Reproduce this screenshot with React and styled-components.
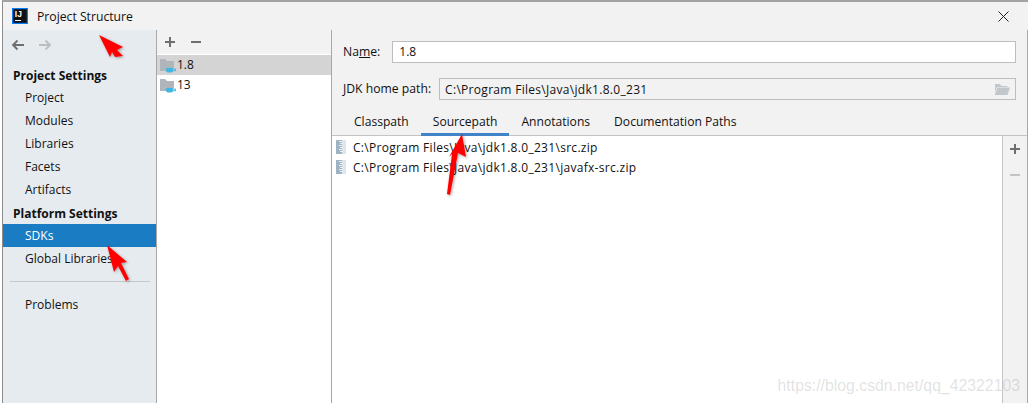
import React from "react";
import styled, { createGlobalStyle } from "styled-components";

const GlobalStyle = createGlobalStyle`
  html, body {
    margin: 0;
    padding: 0;
    background: #fff;
  }
  body {
    font-family: "Open Sans", "Noto Sans", sans-serif;
    font-size: 12px;
    color: #111;
  }
`;

const projectItems = ["Project", "Modules", "Libraries", "Facets", "Artifacts"];
const tabs = ["Classpath", "Sourcepath", "Annotations", "Documentation Paths"];
const paths = [
  "C:\\Program Files\\Java\\jdk1.8.0_231\\src.zip",
  "C:\\Program Files\\Java\\jdk1.8.0_231\\javafx-src.zip",
];

const PlusIcon = ({ color = "#6e6e6e" }) => (
  <svg width="12" height="12" viewBox="0 0 12 12">
    <path d="M5 1h2v4h4v2H7v4H5V7H1V5h4z" fill={color} />
  </svg>
);

const MinusIcon = ({ color = "#6e6e6e" }) => (
  <svg width="12" height="12" viewBox="0 0 12 12">
    <path d="M1 5h10v2H1z" fill={color} />
  </svg>
);

const NavArrow = ({ flip, color }) => (
  <svg width="14" height="12" viewBox="0 0 14 12" style={{ transform: flip ? "scaleX(-1)" : "none" }}>
    <path d="M13 6H2M6.500 1.500 2 6l4.500 4.500" fill="none" stroke={color} strokeWidth="1.800" />
  </svg>
);

const JdkIcon = () => (
  <svg width="17" height="16" viewBox="0 0 17 16">
    <path d="M0 1h5l2 2h7v7H8v3H0z" fill="#afb5bb" />
    <path d="M6 10h7v2.500a2 2 0 0 1-2 2H8a2 2 0 0 1-2-2z" fill="#40b6e0" />
    <path d="M13 11h2.500v1.800H13" fill="none" stroke="#40b6e0" strokeWidth="1" />
  </svg>
);

const ZipIcon = () => (
  <svg width="10" height="14" viewBox="0 0 10 14">
    <rect width="10" height="14" fill="#9fb4c2" />
    <rect x="6" width="4" height="14" fill="#dfe6eb" />
    <path d="M3 1h3v1H3zM4 3h3v1H4zM3 5h3v1H3zM4 7h3v1H4zM3 9h3v1H3zM4 11h3v1H4z" fill="#eef2f5" />
  </svg>
);

const IdeaLogo = () => (
  <svg width="16" height="16" viewBox="0 0 16 16">
    <rect width="16" height="16" fill="#087cfa" />
    <rect x="1.200" y="1.200" width="13.600" height="13.600" fill="#111" />
    <path d="M3 12h6v1H3z" fill="#fff" />
    <text x="2.800" y="9" fontFamily="Liberation Sans" fontWeight="700" fontSize="8.500" fill="#fff">IJ</text>
  </svg>
);

const OpenFolder = () => (
  <svg width="16" height="13" viewBox="0 0 16 13">
    <path d="M1 11 3.500 4.500H16L13.500 12H1zM1 9V1h5l1.500 2h6v1H3z" fill="#c2c7cc" />
  </svg>
);

const App = () => (
  <Window>
    <GlobalStyle />
    <TitleBar>
      <IdeaLogo />
      <TitleText>Project Structure</TitleText>
      <CloseButton>
        <svg width="11" height="11" viewBox="0 0 11 11">
          <path d="M.5.5l10 10M10.500.5l-10 10" stroke="#222" strokeWidth="1" fill="none" />
        </svg>
      </CloseButton>
    </TitleBar>

    <Body>
      <Sidebar>
        <NavBar>
          <NavArrow color="#6e6e6e" />
          <NavArrow flip color="#bdbdbd" />
        </NavBar>
        <SectionTitle>Project Settings</SectionTitle>
        {projectItems.map((item) => (
          <NavItem key={item}>{item}</NavItem>
        ))}
        <SectionTitle>Platform Settings</SectionTitle>
        <NavItem $active>SDKs</NavItem>
        <NavItem>Global Libraries</NavItem>
        <SideDivider />
        <NavItem>Problems</NavItem>
      </Sidebar>

      <SdkColumn>
        <SdkToolbar>
          <PlusIcon />
          <MinusIcon />
        </SdkToolbar>
        <SdkList>
          <SdkRow $selected>
            <JdkIcon />
            1.8
          </SdkRow>
          <SdkRow>
            <JdkIcon />
            13
          </SdkRow>
        </SdkList>
      </SdkColumn>

      <Detail>
        <Fields>
          <FieldRow>
            <FieldLabel>
              Na<u>m</u>e:
            </FieldLabel>
            <NameInput>1.8</NameInput>
          </FieldRow>
          <FieldRow>
            <FieldLabel>JDK home path:</FieldLabel>
            <PathInput>
              <PathValue>C:\Program Files\Java\jdk1.8.0_231</PathValue>
              <OpenFolder />
            </PathInput>
          </FieldRow>
        </Fields>
        <TabBar>
          {tabs.map((tab) => (
            <Tab key={tab} $active={tab === "Sourcepath"}>
              {tab}
            </Tab>
          ))}
        </TabBar>
        <TabBody>
          <PathList>
            {paths.map((path) => (
              <PathRow key={path}>
                <ZipIcon />
                <PathValue>{path}</PathValue>
              </PathRow>
            ))}
          </PathList>
          <SideTools>
            <PlusIcon />
            <MinusIcon color="#c4c4c4" />
          </SideTools>
        </TabBody>
      </Detail>
    </Body>

    <Watermark>https://blog.csdn.net/qq_42322103</Watermark>

    <ArrowLayer width="1030" height="403" viewBox="0 0 1030 403">
      <defs>
        <filter id="arrowShadow" x="-40%" y="-40%" width="180%" height="180%">
          <feDropShadow dx="1" dy="1" stdDeviation="1.500" floodColor="#000" floodOpacity="0.35" />
        </filter>
      </defs>
      <g fill="#f00" filter="url(#arrowShadow)">
        <path d="M99 35 123 47 117 50 123 56 115 57 112 52 110 57z" />
        <path d="M107 245 127 262 121 263 129 279 126 281 118 266 114 272z" />
        <path d="M462 134 466 157 458 153 450 195 447 194 452 154 449 157z" />
      </g>
    </ArrowLayer>
  </Window>
);

const Window = styled.div`
  position: relative;
  box-sizing: border-box;
  width: 1026px;
  height: 403px;
  margin-left: 2px;
  overflow: hidden;
  display: flex;
  flex-direction: column;
  background: #f2f2f2;
  border-top: 2px solid #a3a3a3;
  border-left: 1px solid #8c8c8c;
`;

const TitleBar = styled.div`
  flex: 0 0 28px;
  display: flex;
  align-items: center;
  padding-left: 9px;
  background: #f2f2f2;
`;

const TitleText = styled.div`
  margin-left: 9px;
  font-size: 12.2px;
`;

const CloseButton = styled.div`
  margin-left: auto;
  margin-right: 19px;
  display: flex;
`;

const Body = styled.div`
  flex: 1;
  min-height: 0;
  display: flex;
  border-right: 1px solid #a8a8a8;
`;

const Sidebar = styled.div`
  box-sizing: border-box;
  flex: 0 0 154px;
  background: #e6ebf0;
  border-right: 1px solid #a8a8a8;
`;

const NavBar = styled.div`
  display: flex;
  align-items: center;
  gap: 13px;
  height: 29px;
  padding-left: 8px;
  margin-bottom: 5px;
`;

const SectionTitle = styled.div`
  height: 22px;
  margin-top: 1px;
  line-height: 23px;
  padding-left: 10px;
  font-weight: 700;
`;

const NavItem = styled.div`
  height: 23px;
  line-height: 23px;
  padding-left: 22px;
  white-space: nowrap;
  overflow: hidden;
  color: ${(p) => (p.$active ? "#fff" : "#111")};
  background: ${(p) => (p.$active ? "#1a7dc4" : "transparent")};
`;

const SideDivider = styled.div`
  height: 1px;
  margin: 11px 6px 11px 7px;
  background: #c4c8cc;
`;

const SdkColumn = styled.div`
  box-sizing: border-box;
  flex: 0 0 175px;
  display: flex;
  flex-direction: column;
  border-right: 1px solid #a8a8a8;
`;

const SdkToolbar = styled.div`
  flex: 0 0 24px;
  display: flex;
  align-items: center;
  gap: 14px;
  padding-left: 7px;
`;

const SdkList = styled.div`
  flex: 1;
  padding-top: 1px;
  background: #fff;
`;

const SdkRow = styled.div`
  box-sizing: border-box;
  display: flex;
  align-items: center;
  height: 20px;
  padding: 0 0 2px 3px;
  background: ${(p) => (p.$selected ? "#d4d4d4" : "transparent")};

  svg {
    margin-top: 4px;
  }
`;

const Detail = styled.div`
  flex: 1;
  min-width: 0;
  display: flex;
  flex-direction: column;
`;

const Fields = styled.div`
  display: flex;
  flex-direction: column;
  gap: 15px;
  padding: 11px 11px 0 11px;
`;

const FieldRow = styled.div`
  display: flex;
  align-items: center;
`;

const FieldLabel = styled.div`
  margin: 0 8px 2px 0;
  font-size: 12.2px;
  white-space: nowrap;
`;

const NameInput = styled.div`
  box-sizing: border-box;
  flex: 1;
  height: 22px;
  margin-left: 4px;
  padding-left: 6px;
  line-height: 20px;
  background: #fff;
  border: 1px solid #bdbdbd;
`;

const PathInput = styled.div`
  box-sizing: border-box;
  flex: 1;
  height: 22px;
  display: flex;
  align-items: center;
  justify-content: space-between;
  padding: 0 5px;
  background: #f2f2f2;
  border: 1px solid #bdbdbd;
`;

const PathValue = styled.span`
  letter-spacing: 0.3px;
`;

const TabBar = styled.div`
  box-sizing: border-box;
  height: 36px;
  display: flex;
  align-items: stretch;
  padding-left: 10px;
  border-bottom: 1px solid #c4c4c4;
`;

const Tab = styled.div`
  display: flex;
  align-items: center;
  padding: 9px 12px 0;
  margin-bottom: -1px;
  font-size: 12.1px;
  border-bottom: 3px solid ${(p) => (p.$active ? "#4083c9" : "transparent")};
`;

const TabBody = styled.div`
  flex: 1;
  display: flex;
  min-height: 0;
`;

const PathList = styled.div`
  flex: 1;
  padding-top: 1px;
  background: #fff;
`;

const PathRow = styled.div`
  display: flex;
  align-items: center;
  gap: 7px;
  height: 20px;
  padding-left: 4px;
`;

const SideTools = styled.div`
  box-sizing: border-box;
  flex: 0 0 25px;
  display: flex;
  flex-direction: column;
  align-items: center;
  gap: 14px;
  padding-top: 7px;
  border-left: 1px solid #c4c4c4;
`;

const Watermark = styled.div`
  position: absolute;
  right: 8px;
  bottom: 8px;
  font-family: "Liberation Sans", sans-serif;
  font-size: 15.8px;
  color: rgba(120, 120, 120, 0.22);
`;

const ArrowLayer = styled.svg`
  position: absolute;
  left: -3px;
  top: -2px;
  pointer-events: none;
`;

export default App;
